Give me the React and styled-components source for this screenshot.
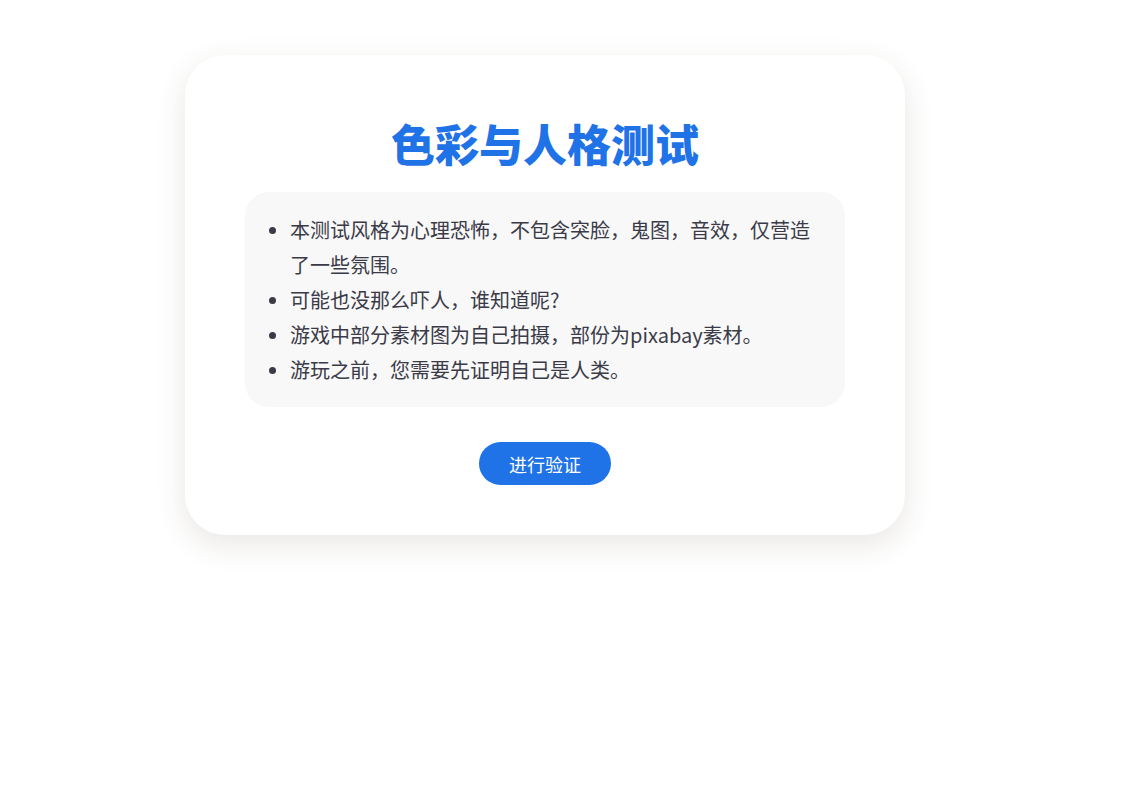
import React from "react";
import styled, { createGlobalStyle } from "styled-components";

const Global = createGlobalStyle`
  html, body {
    margin: 0;
    padding: 0;
    background: #ffffff;
    font-family: "Noto Sans CJK SC", "Noto Sans", sans-serif;
  }
`;

const Page = styled.div`
  width: 1090px;
  display: flex;
  justify-content: center;
  padding: 55px 0 80px;
`;

const Card = styled.div`
  width: 720px;
  box-sizing: border-box;
  padding: 58px 60px 50px;
  background: #ffffff;
  border-radius: 40px;
  box-shadow: 0 10px 30px rgba(70, 60, 30, 0.12);
  display: flex;
  flex-direction: column;
  align-items: center;
`;

const Title = styled.h1`
  margin: 0 0 19px;
  font-size: 44px;
  line-height: 60px;
  font-weight: 900;
  color: #1f73e6;
  letter-spacing: 0;
`;

const InfoBox = styled.div`
  width: 100%;
  box-sizing: border-box;
  background: #f8f8f8;
  border-radius: 24px;
  padding: 20px;
`;

const List = styled.ul`
  margin: 0;
  padding-left: 25px;
  color: #3b3b48;
  font-size: 20px;
  line-height: 35px;
`;

const Item = styled.li`
  &::marker {
    color: #3b3b48;
    font-size: 18px;
  }
`;

const Button = styled.button`
  margin-top: 35px;
  height: 43px;
  padding: 0 30px;
  border: none;
  border-radius: 22px;
  background: #1f73e6;
  color: #ffffff;
  font-family: "Noto Sans CJK SC", "Noto Sans", sans-serif;
  font-size: 18px;
  cursor: pointer;
`;

const items = [
  "本测试风格为心理恐怖，不包含突脸，鬼图，音效，仅营造了一些氛围。",
  "可能也没那么吓人，谁知道呢?",
  "游戏中部分素材图为自己拍摄，部份为pixabay素材。",
  "游玩之前，您需要先证明自己是人类。",
];

export default function App() {
  return (
    <>
      <Global />
      <Page>
        <Card>
          <Title>色彩与人格测试</Title>
          <InfoBox>
            <List>
              {items.map((t) => (
                <Item key={t}>{t}</Item>
              ))}
            </List>
          </InfoBox>
          <Button>进行验证</Button>
        </Card>
      </Page>
    </>
  );
}
